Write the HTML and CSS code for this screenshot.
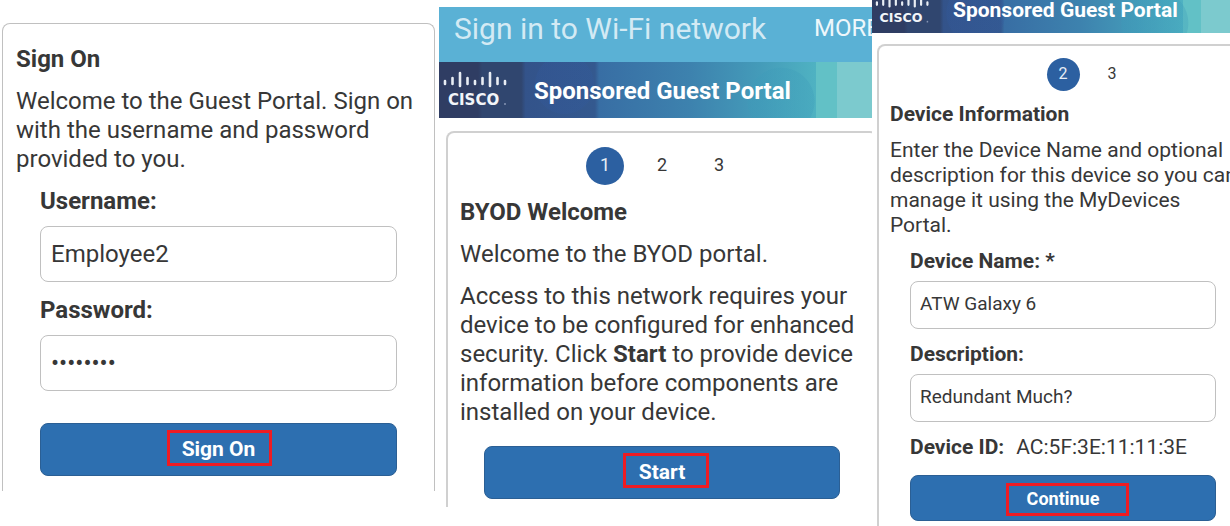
FILE: index.html
```html
<!DOCTYPE html>
<html lang="en">
  <head>
    <meta charset="UTF-8" />
    <meta name="viewport" content="width=device-width, initial-scale=1.0" />
    <title>Guest Portal</title>
    <link rel="stylesheet" href="styles.css" />
  </head>
  <body>
    <main class="screens">
      <!-- Sign on -->
      <section class="screen screen-login">
        <form class="card">
          <h2>Sign On</h2>
          <p>Welcome to the Guest Portal. Sign on with the username and password provided to you.</p>
          <div class="fields">
            <label for="username">Username:</label>
            <input type="text" id="username" value="Employee2" />
            <label for="password">Password:</label>
            <input type="password" id="password" value="password" />
            <button type="button" class="btn"><span class="mark mark-login">Sign On</span></button>
          </div>
        </form>
      </section>

      <!-- BYOD welcome -->
      <section class="screen screen-welcome">
        <div class="wifi-bar">
          <span class="wifi-title">Sign in to Wi-Fi network</span>
          <button type="button" class="more">MORE</button>
        </div>
        <header class="banner">
          <svg class="logo" viewBox="0 2 68 38" role="img" aria-label="Cisco">
            <g stroke="#e8edf4" stroke-width="2.6" stroke-linecap="round">
              <path d="M3 11v3M10.5 8v6M18 3v13M25.5 8v6M33 11v3M40.5 8v6M48 3v13M55.5 8v6M63 11v3" />
            </g>
            <text x="6" y="35">CISCO</text>
            <circle cx="63" cy="34" r="1" fill="#8594b3" />
          </svg>
          <h1>Sponsored Guest Portal</h1>
        </header>
        <div class="card">
          <ol class="steps">
            <li class="active">1</li>
            <li>2</li>
            <li>3</li>
          </ol>
          <h2>BYOD Welcome</h2>
          <p>Welcome to the BYOD portal.</p>
          <p>Access to this network requires your device to be configured for enhanced security. Click <b>Start</b> to provide device information before components are installed on your device.</p>
          <div class="fields">
            <button type="button" class="btn"><span class="mark mark-start">Start</span></button>
          </div>
        </div>
      </section>

      <!-- Device information -->
      <section class="screen screen-device">
        <header class="banner">
          <svg class="logo" viewBox="0 0 68 38" role="img" aria-label="Cisco">
            <g stroke="#e8edf4" stroke-width="2.6" stroke-linecap="round">
              <path d="M3 11v3M10.5 8v6M18 3v13M25.5 8v6M33 11v3M40.5 8v6M48 3v13M55.5 8v6M63 11v3" />
            </g>
            <text x="6" y="35">CISCO</text>
            <circle cx="63" cy="34" r="1" fill="#8594b3" />
          </svg>
          <h1>Sponsored Guest Portal</h1>
        </header>
        <form class="card">
          <ol class="steps">
            <li></li>
            <li class="active">2</li>
            <li>3</li>
          </ol>
          <h2>Device Information</h2>
          <p>Enter the Device Name and optional description for this device so you can manage it using the MyDevices Portal.</p>
          <div class="fields">
            <label for="device-name">Device Name: *</label>
            <input type="text" id="device-name" value="ATW Galaxy 6" />
            <label for="description">Description:</label>
            <input type="text" id="description" value="Redundant Much?" />
            <div class="device-id"><b>Device ID:</b><span>AC:5F:3E:11:11:3E</span></div>
            <button type="button" class="btn"><span class="mark mark-continue">Continue</span></button>
          </div>
        </form>
      </section>
    </main>
  </body>
</html>
```
FILE: styles.css
```css
* {
  margin: 0;
  padding: 0;
  box-sizing: border-box;
}

body {
  font-family: Roboto, "Liberation Sans", sans-serif;
  color: #373737;
  background-color: #fff;
  overflow: hidden;
}

/* LAYOUT */
.screens {
  display: grid;
  grid-template-columns: 439fr 433fr 358fr;
  align-items: start;
  height: 100vh;
}

.screen {
  overflow: hidden;
  font-size: 24px;
  line-height: 29px;
}

.screen-login {
  padding: 23px 4px 0 2px;
}

.screen-welcome {
  padding-top: 7px;
}

.screen-device {
  height: 100%;
  font-size: 21px;
  line-height: 25px;
  display: flex;
  flex-direction: column;
}

/* BARS */
.wifi-bar {
  display: flex;
  justify-content: space-between;
  height: 55px;
  padding-top: 7px;
  padding-left: 15px;
  background-color: #5ab1d5;
  white-space: nowrap;
}

.wifi-title {
  font-size: 30px;
  color: #d3eaf4;
}

.more {
  flex: none;
  width: 58px;
  height: 29px;
  border: none;
  background: none;
  font: 24px/29px Roboto, "Liberation Sans", sans-serif;
  color: #eef7fb;
  text-align: left;
  overflow: hidden;
}

.banner {
  display: flex;
  align-items: center;
  gap: 24px;
  height: 56px;
  padding: 2px 0 0 3px;
  color: #fff;
  background:
    radial-gradient(circle at 79% 70%, rgba(60, 155, 185, 0.3) 33px, transparent 34px),
    radial-gradient(circle at 29% 40%, rgba(50, 90, 160, 0.25) 29px, transparent 30px),
    linear-gradient(90deg, #2f3d63 0 9%, #30466f 10% 19%, #33538a 20%, #34598f 36%, #386ea4 37%, #3d82ae 58%, #449bb9 74%, #4fb2c2 87%, #62c1c6 87% 92%, #7ccace 92%);
}

.banner h1 {
  font-size: 24px;
  line-height: 29px;
  white-space: nowrap;
}

.logo {
  flex: none;
  width: 68px;
  height: 38px;
  overflow: visible;
}

.logo text {
  font: bold 15px "DejaVu Sans", sans-serif;
  fill: #f2f5f9;
}

.screen-device .banner {
  flex: none;
  align-items: flex-end;
  gap: 21px;
  height: 33px;
  padding: 0 0 8px 2px;
  overflow: hidden;
}

.screen-device .banner h1 {
  font-size: 21px;
  line-height: 30px;
}

.screen-device .logo {
  width: 58px;
  height: 32px;
}

/* CARDS */
.card {
  border: 2px solid #d0d0d0;
  border-bottom: none;
  border-radius: 8px 8px 0 0;
}

.screen-login .card {
  height: 468px;
  border-width: 1px;
  border-color: #c0c0c0;
  padding: 21px 13px 0;
}

.screen-welcome .card {
  margin: 13px -6px 0 7px;
  height: 376px;
  padding: 14px 12px 0;
}

.screen-device .card {
  flex: 1;
  margin: 11px -19px 0 5px;
  padding: 12px 7px 0 11px;
}

h2 {
  font-size: inherit;
  margin-bottom: 13px;
}

p {
  margin-bottom: 13px;
}

.screen-device h2,
.screen-device p {
  margin-bottom: 11px;
}

.steps {
  display: flex;
  justify-content: center;
  gap: 19px;
  margin-bottom: 13px;
  list-style: none;
  font-size: 18px;
}

.steps li {
  width: 38px;
  height: 38px;
  line-height: 36px;
  border-radius: 50%;
  text-align: center;
}

.steps .active {
  color: #e6edf6;
  background-color: #2c60a1;
}

.screen-device .steps {
  gap: 16px;
  margin-bottom: 11px;
  padding-right: 4px;
  font-size: 16px;
}

.screen-device .steps li {
  width: 33px;
  height: 33px;
  line-height: 32px;
}

/* FORM */
.fields {
  display: flex;
  flex-direction: column;
  padding: 0 24px;
}

.screen-device .fields {
  padding: 0 24px 0 20px;
}

label {
  font-weight: bold;
  margin-bottom: 10px;
}

input {
  width: 100%;
  height: 56px;
  margin-bottom: 14px;
  padding: 0 10px;
  border: 1px solid #c0c0c0;
  border-radius: 8px;
  background-color: #fff;
  font: inherit;
  color: inherit;
}

.screen-device label {
  margin-bottom: 7px;
}

.screen-device input {
  height: 48px;
  margin-bottom: 13px;
  padding: 0 9px 4px;
  font-size: 19px;
}

.device-id {
  display: flex;
  gap: 12px;
  margin-bottom: 15px;
}

.btn {
  width: 100%;
  height: 53px;
  border: 1px solid #2b5f94;
  border-radius: 8px;
  background-color: #2d6fb0;
  font: bold 21px/27px Roboto, "Liberation Sans", sans-serif;
  color: #fff;
  cursor: pointer;
}

.btn:hover {
  background-color: #28649f;
}

.screen-login .btn {
  margin-top: 18px;
}

.screen-welcome .btn {
  margin-top: 6px;
}

.screen-device .btn {
  height: 46px;
  font-size: 18px;
}

/* red frame over the button text */
.mark {
  position: relative;
}

.mark::after {
  content: "";
  position: absolute;
  border: 3px solid #ee1c23;
}

.mark-login::after {
  inset: -7px -17px -5px -15px;
}

.mark-start::after {
  inset: -7px -24px -4px -16px;
}

.mark-continue::after {
  inset: -5px -30px -7px -21px;
}
```
